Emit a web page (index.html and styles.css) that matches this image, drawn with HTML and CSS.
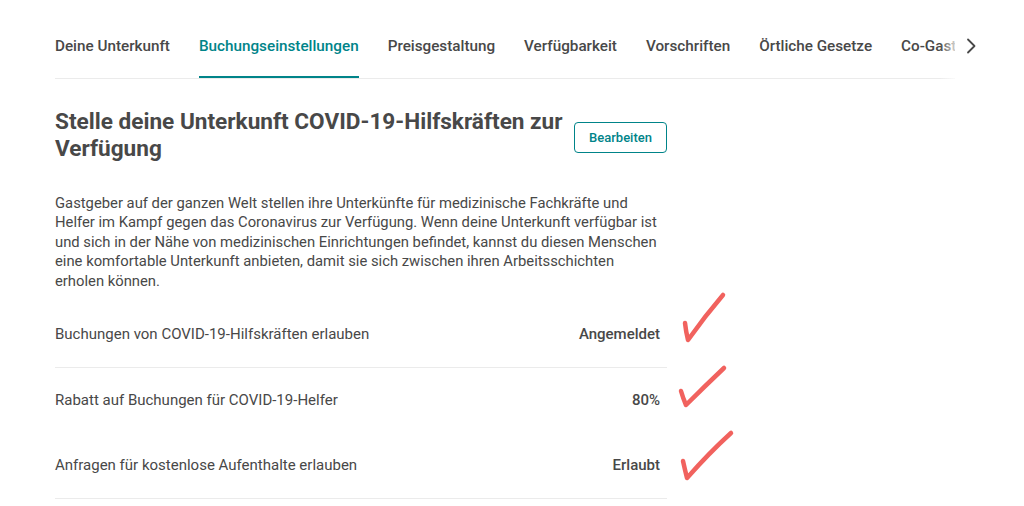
FILE: index.html
```html
<!DOCTYPE html>
<html lang="de">
<head>
  <meta charset="UTF-8" />
  <title>Buchungseinstellungen</title>
  <link rel="stylesheet" href="styles.css">
</head>
<body>
  <div class="page">
    <div class="tabbar">
      <nav class="tabs">
        <a class="tab">Deine Unterkunft</a>
        <a class="tab active">Buchungseinstellungen</a>
        <a class="tab">Preisgestaltung</a>
        <a class="tab">Verfügbarkeit</a>
        <a class="tab">Vorschriften</a>
        <a class="tab">Örtliche Gesetze</a>
        <a class="tab">Co-Gastgeber</a>
      </nav>
      <div class="tabs-fade">
        <svg width="12" height="16" viewBox="0 0 12 16"><path d="M4 1.5l6.5 6.5-6.5 6.5" fill="none" stroke="#484848" stroke-width="1.8" stroke-linecap="round" stroke-linejoin="round"/></svg>
      </div>
    </div>

    <section class="content">
      <div class="head">
        <h2>Stelle deine Unterkunft COVID-19-Hilfskräften zur Verfügung</h2>
        <button type="button" class="edit">Bearbeiten</button>
      </div>

      <p class="intro">Gastgeber auf der ganzen Welt stellen ihre Unterkünfte für medizinische Fachkräfte und Helfer im Kampf gegen das Coronavirus zur Verfügung. Wenn deine Unterkunft verfügbar ist und sich in der Nähe von medizinischen Einrichtungen befindet, kannst du diesen Menschen eine komfortable Unterkunft anbieten, damit sie sich zwischen ihren Arbeitsschichten erholen können.</p>

      <div class="row line">
        <span>Buchungen von COVID-19-Hilfskräften erlauben</span>
        <strong>Angemeldet</strong>
      </div>
      <div class="row">
        <span>Rabatt auf Buchungen für COVID-19-Helfer</span>
        <strong>80%</strong>
      </div>
      <div class="row line">
        <span>Anfragen für kostenlose Aufenthalte erlauben</span>
        <strong>Erlaubt</strong>
      </div>
    </section>

    <!-- hand-drawn check marks on top of the screenshot -->
    <svg class="marks" width="1024" height="506" viewBox="0 0 1024 506">
      <g fill="none" stroke="#f1625e" stroke-width="4.5" stroke-linecap="round" stroke-linejoin="round">
        <path d="M685 323 Q686 332 688 340 Q705 316 723 295"/>
        <path d="M681 391 Q683 398 686 405 Q705 386 724 368"/>
        <path d="M683 461 Q685 470 687 478 Q709 453 731 433"/>
      </g>
    </svg>
  </div>
</body>
</html>
```

FILE: styles.css
```css
body {
  margin: 0;
  background: #fff;
  font-family: Roboto, "Liberation Sans", sans-serif;
  color: #484848;
}

.page {
  position: relative;
  padding-left: 55px;
}

.tabbar {
  position: relative;
  width: 930px;
}

.tabs {
  display: flex;
  gap: 29px;
  width: 900px;
  height: 78px;
  border-bottom: 1px solid #ebebeb;
  overflow: hidden;
  white-space: nowrap;
}

.tab {
  display: block;
  flex: none;
  padding-top: 36px;
  height: 40px;
  font-size: 15.25px;
  font-weight: 500;
  line-height: 20px;
  color: #484848;
  border-bottom: 2px solid transparent;
}

.tab.active {
  color: #008489;
  border-bottom-color: #008489;
}

.tabs-fade {
  position: absolute;
  top: 0;
  right: 0;
  width: 45px;
  height: 80px;
  display: flex;
  align-items: flex-start;
  justify-content: flex-end;
  padding: 38px 9px 0 0;
  box-sizing: border-box;
  background: linear-gradient(to right, rgba(255 255 255 / 0), #fff 20px);
}

.content {
  width: 612px;
}

.head {
  display: flex;
  align-items: flex-start;
  gap: 8px;
  margin-top: 29px;
}

.head h2 {
  flex: 1;
  margin: 0;
  font-size: 22.6px;
  font-weight: 700;
  line-height: 27px;
}

.edit {
  flex: none;
  margin-top: 14px;
  width: 93px;
  height: 31px;
  padding: 0;
  border: 1px solid #008489;
  border-radius: 4px;
  background: #fff;
  color: #008489;
  font-family: inherit;
  font-size: 13px;
  font-weight: 500;
  cursor: pointer;
}

.intro {
  width: 605px;
  margin: 32px 0 0;
  font-size: 14.8px;
  line-height: 19.4px;
}

.row {
  display: flex;
  justify-content: space-between;
  padding: 22px 7px 22px 0;
  font-size: 15px;
  line-height: 21px;
}

.intro + .row {
  margin-top: 11px;
}

.row.line {
  border-bottom: 1px solid #ebebeb;
}

.row strong {
  font-weight: 500;
}

.marks {
  position: absolute;
  top: 0;
  left: 0;
  pointer-events: none;
}
```
